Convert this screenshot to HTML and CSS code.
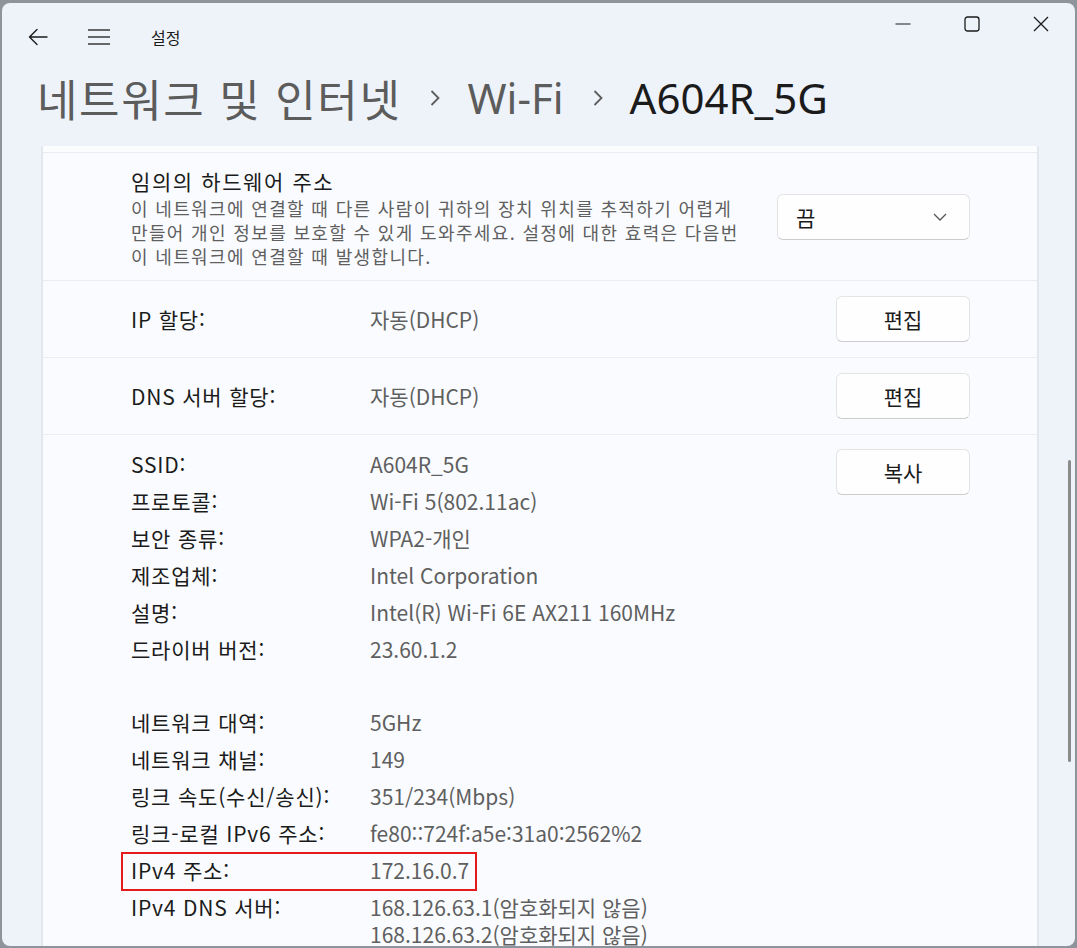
FILE: index.html
```html
<!DOCTYPE html>
<html lang="ko">
<head>
<meta charset="utf-8">
<title>설정</title>
<link rel="stylesheet" href="styles.css">
</head>
<body>
<div class="window">
  <div class="titlebar">
    <div class="tb-left">
      <svg class="ico-back" width="20" height="18" viewBox="0 0 20 18"><path d="M19 9H1.5M9 1.5L1.5 9L9 16.5" fill="none" stroke="#1b1b1b" stroke-width="1.4" stroke-linecap="round" stroke-linejoin="round"/></svg>
      <svg class="ico-menu" width="22" height="16" viewBox="0 0 22 16"><path d="M0 1H22M0 8H22M0 15H22" fill="none" stroke="#3a3a3a" stroke-width="1.6"/></svg>
      <span class="app-name">설정</span>
    </div>
    <div class="caption">
      <div class="cbtn"><svg width="16" height="16" viewBox="0 0 16 16"><path d="M0.5 8H15.5" stroke="#1b1b1b" stroke-width="1.2"/></svg></div>
      <div class="cbtn"><svg width="16" height="16" viewBox="0 0 16 16"><rect x="1" y="1" width="14" height="14" rx="2.5" fill="none" stroke="#1b1b1b" stroke-width="1.3"/></svg></div>
      <div class="cbtn"><svg width="16" height="16" viewBox="0 0 16 16"><path d="M1 1L15 15M15 1L1 15" stroke="#1b1b1b" stroke-width="1.3"/></svg></div>
    </div>
  </div>

  <div class="header">
    <span class="crumb crumb-ko">네트워크 및 인터넷</span>
    <svg class="chev" width="12" height="18" viewBox="0 0 12 18"><path d="M2.5 2L9.5 9L2.5 16" fill="none" stroke="#5c5c5c" stroke-width="1.8"/></svg>
    <span class="crumb crumb-lat">Wi-Fi</span>
    <svg class="chev" width="12" height="18" viewBox="0 0 12 18"><path d="M2.5 2L9.5 9L2.5 16" fill="none" stroke="#5c5c5c" stroke-width="1.8"/></svg>
    <span class="crumb crumb-cur">A604R_5G</span>
  </div>

  <div class="scroll">
    <div class="card">
      <div class="row row-prev"></div>

      <div class="row row-mac">
        <div class="mac-text">
          <div class="mac-title">임의의 하드웨어 주소</div>
          <div class="mac-desc">이 네트워크에 연결할 때 다른 사람이 귀하의 장치 위치를 추적하기 어렵게<br>만들어 개인 정보를 보호할 수 있게 도와주세요. 설정에 대한 효력은 다음번<br>이 네트워크에 연결할 때 발생합니다.</div>
        </div>
        <div class="dropdown">
          <span>끔</span>
          <svg width="14" height="8" viewBox="0 0 14 8"><path d="M1 1L7 7L13 1" fill="none" stroke="#555" stroke-width="1.3"/></svg>
        </div>
      </div>

      <div class="row row-simple">
        <div class="lbl">IP 할당:</div>
        <div class="val">자동(DHCP)</div>
        <div class="btn">편집</div>
      </div>

      <div class="row row-simple">
        <div class="lbl">DNS 서버 할당:</div>
        <div class="val">자동(DHCP)</div>
        <div class="btn">편집</div>
      </div>

      <div class="row row-info">
        <div class="info">
          <div class="item"><div class="lbl">SSID:</div><div class="val">A604R_5G</div></div>
          <div class="item"><div class="lbl">프로토콜:</div><div class="val">Wi-Fi 5(802.11ac)</div></div>
          <div class="item"><div class="lbl">보안 종류:</div><div class="val">WPA2-개인</div></div>
          <div class="item"><div class="lbl">제조업체:</div><div class="val">Intel Corporation</div></div>
          <div class="item"><div class="lbl">설명:</div><div class="val">Intel(R) Wi-Fi 6E AX211 160MHz</div></div>
          <div class="item"><div class="lbl">드라이버 버전:</div><div class="val">23.60.1.2</div></div>
          <div class="spacer"></div>
          <div class="item"><div class="lbl">네트워크 대역:</div><div class="val">5GHz</div></div>
          <div class="item"><div class="lbl">네트워크 채널:</div><div class="val">149</div></div>
          <div class="item"><div class="lbl">링크 속도(수신/송신):</div><div class="val">351/234(Mbps)</div></div>
          <div class="item"><div class="lbl">링크-로컬 IPv6 주소:</div><div class="val">fe80::724f:a5e:31a0:2562%2</div></div>
          <div class="item highlight"><div class="lbl">IPv4 주소:</div><div class="val">172.16.0.7</div></div>
          <div class="item"><div class="lbl">IPv4 DNS 서버:</div><div class="val">168.126.63.1(암호화되지 않음)<br>168.126.63.2(암호화되지 않음)</div></div>
        </div>
        <div class="btn">복사</div>
      </div>
    </div>
    <div class="scrollbar"></div>
  </div>
</div>
</body>
</html>
```

FILE: styles.css
```css
* { box-sizing: border-box; }
html, body { margin: 0; padding: 0; }
body {
  width: 1077px;
  height: 948px;
  overflow: hidden;
  background: #8e949b;
  padding: 3px 2px 2px 2px;
  font-family: "Noto Sans CJK KR", "Noto Sans", sans-serif;
  color: #1b1b1b;
}
.window {
  width: 1073px;
  height: 943px;
  background: #eef3f9;
  border-radius: 8px;
  overflow: hidden;
  display: flex;
  flex-direction: column;
  position: relative;
}
.titlebar {
  height: 68px;
  flex: none;
  display: flex;
  justify-content: space-between;
}
.tb-left {
  display: flex;
  align-items: center;
  padding-left: 26px;
}
.ico-back { display: block; }
.ico-menu { display: block; margin-left: 40px; }
.app-name {
  margin-left: 41px;
  font-size: 16px;
  color: #1b1b1b;
}
.caption { display: flex; align-items: flex-start; }
.cbtn {
  width: 69px;
  height: 42px;
  display: flex;
  align-items: center;
  justify-content: center;
}
.cbtn svg { display: block; }

.header {
  height: 75px;
  flex: none;
  display: flex;
  align-items: center;
  padding-left: 35px;
  padding-bottom: 22px;
}
.crumb { white-space: nowrap; line-height: 56px; }
.crumb-ko {
  font-size: 44px;
  letter-spacing: 1.6px;
  color: #5c5c5c;
}
.crumb-lat {
  font-family: "Noto Sans", sans-serif;
  font-size: 42px;
  color: #5c5c5c;
}
.crumb-cur {
  font-family: "Noto Sans", sans-serif;
  font-size: 42px;
  color: #1b1b1b;
}
.chev { display: block; margin: 0 26px 0 28px; }

.scroll {
  flex: 1;
  position: relative;
  overflow: hidden;
}
.card {
  margin-left: 39px;
  width: 998px;
  min-height: 100%;
  background: #f9fbfe;
  border-left: 2px solid #e3e8ee;
  border-right: 2px solid #e3e8ee;
}
.row {
  border-bottom: 1px solid #e8edf3;
  padding: 0 67px 0 88px;
  display: flex;
  align-items: center;
}
.row-prev { height: 7px; background: #fbfcfe; }
.row-mac {
  height: 128px;
  justify-content: space-between;
  align-items: flex-start;
  padding-top: 15px;
}
.mac-title {
  font-size: 21px;
  line-height: 26px;
  letter-spacing: 1.6px;
  color: #1b1b1b;
}
.mac-desc {
  margin-top: 2px;
  font-size: 18px;
  line-height: 24px;
  color: #5f5f5f;
  letter-spacing: 1.35px;
  white-space: nowrap;
}
.dropdown {
  margin-top: 26px;
  width: 193px;
  height: 46px;
  border: 1px solid #e4e4e4;
  border-bottom-color: #cdcdcd;
  border-radius: 6px;
  background: #fefefe;
  display: flex;
  align-items: center;
  justify-content: space-between;
  padding: 0 22px 0 18px;
  font-size: 21px;
}
.dropdown svg { display: block; }

.lbl {
  width: 239px;
  flex: none;
  font-size: 21px;
  letter-spacing: 0.8px;
  color: #1b1b1b;
  white-space: nowrap;
}
.val {
  font-size: 21px;
  color: #5f5f5f;
  white-space: nowrap;
}
.row-simple { height: 77px; }
.row-simple .val { flex: 1; }
.btn {
  width: 134px;
  height: 46px;
  flex: none;
  border: 1px solid #e4e4e4;
  border-bottom-color: #cdcdcd;
  border-radius: 6px;
  background: #fefefe;
  display: flex;
  align-items: center;
  justify-content: center;
  font-size: 21px;
  color: #1b1b1b;
}
.row-info {
  align-items: flex-start;
  padding-top: 14px;
  border-bottom: none;
}
.info {
  flex: 1;
  padding-top: 2px;
  display: flex;
  flex-direction: column;
  gap: 10px;
}
.item {
  display: flex;
  line-height: 27px;
  position: relative;
}
.item .lbl, .item .val { line-height: 27px; }
.spacer { height: 26px; }
.highlight::after {
  content: "";
  position: absolute;
  left: -10px;
  top: -5px;
  width: 352px;
  height: 35px;
  border: 2px solid #e31b1b;
}
.scrollbar {
  position: absolute;
  left: 1066px;
  top: 314px;
  width: 3px;
  height: 302px;
  border-radius: 2px;
  background: #8a8a8a;
}
```
